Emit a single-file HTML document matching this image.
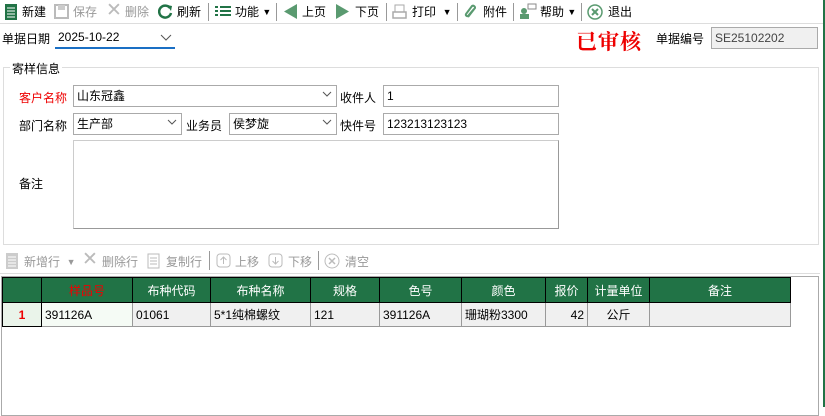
<!DOCTYPE html><html><head><meta charset="utf-8"><style>
*{box-sizing:border-box;margin:0;padding:0}
body{width:825px;height:407px;background:#fff;font-family:"Liberation Sans","Noto Sans CJK SC",sans-serif;font-size:12px;color:#000;position:relative;overflow:hidden}
.a{position:absolute;white-space:nowrap}
.sep{position:absolute;width:1px;background:#999;}
.g{color:#999}
.dd{font-size:9px;vertical-align:1px}
.inp{position:absolute;border:1px solid #aaa;background:#fff;padding:2px 3px;height:22px;line-height:16px}
.chev{position:absolute;right:4px;top:3px;width:10px;height:10px}
table{border-collapse:collapse;position:absolute;left:2px;top:277px}
td{height:24px;border:1px solid #999;padding:0 3px;font-size:12px}
th{height:25px;border:1px solid #000;background:#217346;color:#fff;font-weight:normal;font-size:12px;border-bottom-color:#000}
</style></head><body>
<div class="a" style="left:823px;top:0;width:2px;height:407px;background:#217346"></div>
<svg class="a" style="left:4px;top:4px" width="14" height="16"><rect x="1" y="0" width="12" height="16" fill="#217346"/><path d="M3 4h8M3 7h8M3 10h8M3 13h8" stroke="#fff"/></svg>
<div class="a" style="left:22px;top:3px">新建</div>
<svg class="a" style="left:54px;top:4px" width="15" height="15"><rect x="1" y="1" width="13" height="13" fill="none" stroke="#bbb" stroke-width="2"/><rect x="4" y="1" width="7" height="5" fill="#ccc"/></svg>
<div class="a g" style="left:73px;top:3px">保存</div>
<div class="a" style="left:106px;top:-1px;font-size:19px;color:#bbb">✕</div>
<div class="a g" style="left:125px;top:3px">删除</div>
<svg class="a" style="left:158px;top:4px" width="15" height="15"><path d="M12 4A6 6 0 1 0 13 9" fill="none" stroke="#217346" stroke-width="2.5"/><path d="M9 1l5 1-1 5z" fill="#217346"/></svg>
<div class="a" style="left:177px;top:3px">刷新</div>
<div class="sep" style="left:208px;top:3px;height:18px"></div>
<svg class="a" style="left:215px;top:5px" width="16" height="13"><path d="M0 2h3M0 6h3M0 10h3M5 2h11M5 6h11M5 10h11" stroke="#217346" stroke-width="2"/></svg>
<div class="a" style="left:235px;top:3px">功能 <span class="dd">▼</span></div>
<div class="sep" style="left:276px;top:3px;height:18px"></div>
<svg class="a" style="left:284px;top:4px" width="13" height="15"><path d="M13 0v15L0 7.5z" fill="#5a9a70"/></svg>
<div class="a" style="left:302px;top:3px">上页</div>
<svg class="a" style="left:336px;top:4px" width="13" height="15"><path d="M0 0v15L13 7.5z" fill="#5a9a70"/></svg>
<div class="a" style="left:355px;top:3px">下页</div>
<div class="sep" style="left:386px;top:3px;height:18px"></div>
<svg class="a" style="left:392px;top:4px" width="15" height="15"><rect x="3" y="1" width="9" height="7" fill="none" stroke="#aaa"/><rect x="1" y="8" width="13" height="6" fill="none" stroke="#aaa" stroke-width="1.5"/></svg>
<div class="a" style="left:412px;top:3px">打印 &nbsp;<span class="dd">▼</span></div>
<div class="sep" style="left:457px;top:3px;height:18px"></div>
<svg class="a" style="left:464px;top:4px" width="14" height="15"><path d="M4 13L11 4a2 2 0 0 0-3-2L2 10a1.5 1.5 0 0 0 2 2l6-7" fill="none" stroke="#5a9a70" stroke-width="2"/></svg>
<div class="a" style="left:483px;top:3px">附件</div>
<div class="sep" style="left:513px;top:3px;height:18px"></div>
<svg class="a" style="left:519px;top:3px" width="18" height="17"><circle cx="5" cy="8" r="3" fill="#5a9a70"/><rect x="1" y="11" width="9" height="5" fill="#5a9a70"/><rect x="9" y="1" width="8" height="5" fill="none" stroke="#888"/></svg>
<div class="a" style="left:540px;top:3px">帮助 <span class="dd">▼</span></div>
<div class="sep" style="left:581px;top:3px;height:18px"></div>
<svg class="a" style="left:587px;top:4px" width="16" height="16"><circle cx="8" cy="8" r="7" fill="none" stroke="#5a9a70" stroke-width="1.5"/><path d="M5 5l6 6M11 5l-6 6" stroke="#5a9a70" stroke-width="2"/></svg>
<div class="a" style="left:608px;top:3px">退出</div>
<div class="a" style="left:0;top:23px;width:823px;height:1px;background:#ddd"></div>
<div class="a" style="left:2px;top:30px">单据日期</div>
<div class="a" style="left:55px;top:27px;width:120px;height:22px;border-bottom:2px solid #1a6fc4"></div>
<div class="a" style="left:58px;top:30px">2025-10-22</div>
<svg class="a" style="left:160px;top:34px" width="12" height="8"><path d="M1 1l5 5 5-5" fill="none" stroke="#555"/></svg>
<div class="a" style="left:576px;top:26px;font-size:21px;font-weight:bold;color:#e00;font-family:'Noto Serif CJK SC',serif;letter-spacing:1px">已审核</div>
<div class="a" style="left:656px;top:30px">单据编号</div>
<div class="inp" style="left:711px;top:27px;width:107px;background:#f0f0f0;color:#444">SE25102202</div>
<div class="a" style="left:3px;top:67px;width:816px;height:178px;border:1px solid #ddd"></div>
<div class="a" style="left:10px;top:60px;background:#fff;padding:0 2px">寄样信息</div>
<div class="a" style="left:19px;top:89px;color:#e00">客户名称</div>
<div class="inp" style="left:73px;top:85px;width:264px">山东冠鑫<svg class="chev" viewBox="0 0 10 10"><path d="M1 3l4 4 4-4" fill="none" stroke="#555"/></svg></div>
<div class="a" style="left:340px;top:89px">收件人</div>
<div class="inp" style="left:383px;top:85px;width:176px">1</div>
<div class="a" style="left:19px;top:117px">部门名称</div>
<div class="inp" style="left:73px;top:113px;width:109px">生产部<svg class="chev" viewBox="0 0 10 10"><path d="M1 3l4 4 4-4" fill="none" stroke="#555"/></svg></div>
<div class="a" style="left:186px;top:117px">业务员</div>
<div class="inp" style="left:229px;top:113px;width:108px">侯梦旋<svg class="chev" viewBox="0 0 10 10"><path d="M1 3l4 4 4-4" fill="none" stroke="#555"/></svg></div>
<div class="a" style="left:340px;top:117px">快件号</div>
<div class="inp" style="left:383px;top:113px;width:176px">123213123123</div>
<div class="a" style="left:19px;top:175px">备注</div>
<div class="inp" style="left:73px;top:140px;width:486px;height:89px;border-color:#ccc #999 #999 #ccc"></div>
<svg class="a" style="left:6px;top:253px" width="12" height="16"><rect x="0" y="0" width="12" height="16" fill="#ccc"/><path d="M2 4h8M2 7h8M2 10h8M2 13h8" stroke="#fff"/></svg>
<div class="a g" style="left:24px;top:253px">新增行 &nbsp;<span class="dd">▼</span></div>
<div class="a" style="left:82px;top:248px;font-size:19px;color:#bbb">✕</div>
<div class="a g" style="left:102px;top:253px">删除行</div>
<svg class="a" style="left:147px;top:253px" width="13" height="16"><rect x="1" y="1" width="11" height="14" fill="none" stroke="#bbb"/><path d="M3 5h7M3 8h7M3 11h7" stroke="#bbb"/></svg>
<div class="a g" style="left:166px;top:253px">复制行</div>
<div class="sep" style="left:209px;top:251px;height:19px"></div>
<svg class="a" style="left:216px;top:253px" width="15" height="15"><rect x="1" y="1" width="13" height="13" rx="3" fill="none" stroke="#bbb"/><path d="M7.5 11V4M4.5 7l3-3 3 3" fill="none" stroke="#bbb"/></svg>
<div class="a g" style="left:235px;top:253px">上移</div>
<svg class="a" style="left:268px;top:253px" width="15" height="15"><rect x="1" y="1" width="13" height="13" rx="3" fill="none" stroke="#bbb"/><path d="M7.5 4v7M4.5 8l3 3 3-3" fill="none" stroke="#bbb"/></svg>
<div class="a g" style="left:288px;top:253px">下移</div>
<div class="sep" style="left:318px;top:251px;height:19px"></div>
<svg class="a" style="left:324px;top:253px" width="16" height="16"><circle cx="8" cy="8" r="7" fill="none" stroke="#bbb"/><path d="M5 5l6 6M11 5l-6 6" stroke="#bbb" stroke-width="1.5"/></svg>
<div class="a g" style="left:345px;top:253px">清空</div>
<div class="a" style="left:0;top:273px;width:820px;height:1px;background:#ddd"></div>
<div class="a" style="left:1px;top:276px;width:818px;height:140px;border:1px solid #aaa"></div>
<table>
<tr><th style="width:39px"></th><th style="width:91px;color:#e00">样品号</th><th style="width:78px">布种代码</th><th style="width:100px">布种名称</th><th style="width:69px">规格</th><th style="width:82px">色号</th><th style="width:84px">颜色</th><th style="width:42px">报价</th><th style="width:62px">计量单位</th><th style="width:141px">备注</th></tr>
<tr style="background:#f0f0f0"><td style="text-align:center;color:#e00;font-weight:bold;background:#eaf4ea;border:1px solid #000">1</td><td style="background:#f5fbf5">391126A</td><td>01061</td><td>5*1纯棉螺纹</td><td>121</td><td>391126A</td><td>珊瑚粉3300</td><td style="text-align:right">42</td><td style="text-align:center">公斤</td><td></td></tr>
</table>
</body></html>
